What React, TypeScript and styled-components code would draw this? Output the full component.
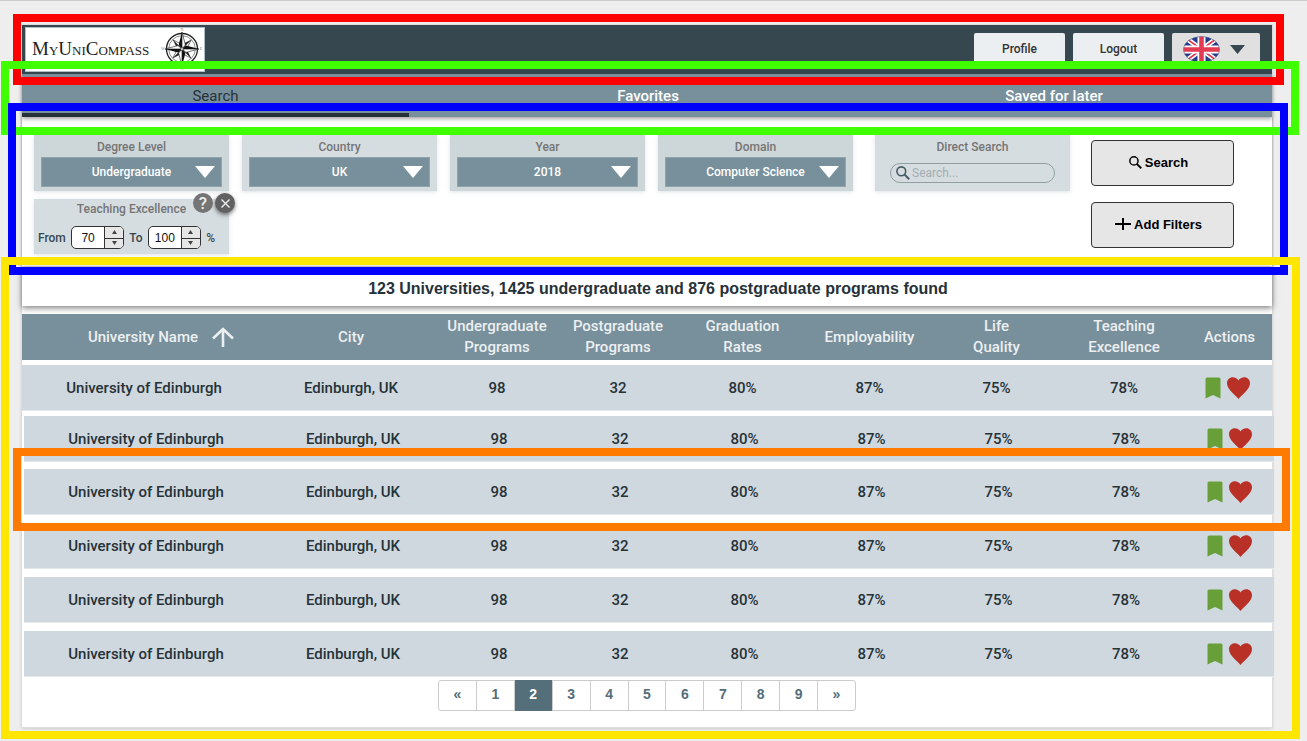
import React, { useState } from "react";
import styled, { createGlobalStyle, css } from "styled-components";

const GlobalStyle = createGlobalStyle`
  *, *::before, *::after { box-sizing: border-box; }
  body {
    margin: 0;
    background: #eeeeee;
    color: #263238;
    font-family: Roboto, "Liberation Sans", sans-serif;
  }
  button, input, select { font-family: inherit; margin: 0; }
`;

/* Coloured annotation frame drawn over a part of the page. */
const frame = (color: string, top: number, right: number, bottom: number, left: number, level: number) => css`
  position: relative;
  &::after {
    content: "";
    position: absolute;
    inset: ${-top}px ${-right}px ${-bottom}px ${-left}px;
    border: 8px solid ${color};
    pointer-events: none;
    z-index: ${level};
  }
`;

const Page = styled.div`
  min-height: 100vh;
  padding: 24px 35px 13px 22px;
  border-top: 1px solid #cccccc;
  overflow: hidden;
`;

const Sheet = styled.main`
  background: #ffffff;
  box-shadow: 0 0 0 1px #dddddd, 0 1px 3px rgba(0, 0, 0, 0.25);
`;

const TopBar = styled.header`
  ${frame("#ff0000", 11, 12, 11, 9, 1)}
  display: flex;
  justify-content: space-between;
  align-items: flex-start;
  height: 49px;
  padding: 2px 12px 0 3px;
  background: #37474f;
`;

const Logo = styled.a`
  display: flex;
  align-items: center;
  justify-content: space-between;
  width: 180px;
  height: 45px;
  padding: 0 1px 2px 6px;
  border: 1px solid #b0bec5;
  background: #ffffff;
  color: #222222;
  font: 19px/22px "Liberation Serif", serif;
  font-variant: small-caps;
  text-decoration: none;
`;

const TopActions = styled.div`
  display: flex;
  gap: 8px;
  padding-top: 6px;
`;

const TopButton = styled.button<{ $muted?: boolean }>`
  display: flex;
  align-items: center;
  justify-content: center;
  gap: 10px;
  width: ${(p) => (p.$muted ? 88 : 91)}px;
  height: 32px;
  padding: ${(p) => (p.$muted ? "0 4px 0 0" : "0")};
  border: 0;
  border-radius: 2px;
  background: ${(p) => (p.$muted ? "#e0e0e0" : "#eceff1")};
  color: #333333;
  font-size: 12px;
  font-weight: 500;
`;

const Tabs = styled.nav`
  ${frame("#40ff00", 13, 27, 18, 21, 2)}
  display: grid;
  grid-template-columns: 387fr 478fr 334fr 51fr;
  height: 43px;
  background: #78909c;
  box-shadow: 0 2px 4px rgba(0, 0, 0, 0.35);
`;

const Tab = styled.a<{ $active?: boolean }>`
  padding-top: 11px;
  border-bottom: 4px solid ${(p) => (p.$active ? "#263238" : "transparent")};
  color: ${(p) => (p.$active ? "#263238" : "#ffffff")};
  font-size: 15px;
  font-weight: ${(p) => (p.$active ? 400 : 500)};
  line-height: 22px;
  text-align: center;
  text-decoration: none;
`;

const Filters = styled.form`
  ${frame("#0000ff", 14, 16, 9, 14, 3)}
  display: grid;
  grid-template-columns: repeat(4, 195fr) 204fr 151fr;
  grid-template-rows: 56px 55px;
  gap: 8px 13px;
  height: 149px;
  padding: 18px 38px 12px 12px;
  box-shadow: 0 1px 2px rgba(0, 0, 0, 0.4);
`;

const FilterCard = styled.div<{ $light?: boolean; $inset?: boolean; $compact?: boolean }>`
  position: relative;
  display: flex;
  flex-direction: column;
  align-items: center;
  margin-left: ${(p) => (p.$inset ? 9 : 0)}px;
  padding: ${(p) => (p.$compact ? 2 : 4)}px 7px;
  background: ${(p) => (p.$light ? "#d6dde0" : "#cdd6d8")};
  box-shadow: 0 1px 4px rgba(120, 144, 156, 0.25);
`;

const FilterTitle = styled.label`
  height: 18px;
  color: #757575;
  font-size: 12px;
  font-weight: 500;
  line-height: 16px;
`;

const SelectBox = styled.div`
  position: relative;
  width: 100%;
  svg {
    position: absolute;
    right: 7px;
    top: 9px;
    pointer-events: none;
  }
`;

const Select = styled.select`
  display: block;
  width: 100%;
  height: 30px;
  padding: 0;
  border: 1px solid #90a4ae;
  border-radius: 0;
  appearance: none;
  background: #78909c;
  color: #ffffff;
  font-size: 12px;
  font-weight: 500;
  text-align: center;
  text-align-last: center;
`;

const SearchBox = styled.div`
  display: flex;
  align-items: center;
  gap: 2px;
  width: 165px;
  height: 20px;
  margin-top: 6px;
  padding: 0 5px;
  border: 1px solid #90a0a2;
  border-radius: 10px;
`;

const SearchInput = styled.input`
  flex: 1;
  min-width: 0;
  padding: 0;
  border: 0;
  outline: 0;
  background: transparent;
  font-size: 12px;
  &::placeholder { color: #a4adb0; }
`;

const RangeRow = styled.div`
  display: flex;
  align-items: center;
  align-self: stretch;
  justify-content: space-between;
  width: 177px;
  margin: 7px 0 0 -3px;
  color: #37474f;
  font-size: 12px;
  font-weight: 500;
`;

const Stepper = styled.span`
  display: flex;
  width: 53px;
  height: 23px;
  overflow: hidden;
  border: 1px solid #333333;
  border-radius: 5px;
  background: #ffffff;
`;

const NumberInput = styled.input`
  flex: 1;
  min-width: 0;
  padding: 0;
  border: 0;
  appearance: textfield;
  background: transparent;
  color: #111111;
  font: 12px "Liberation Sans", sans-serif;
  text-align: center;
  &::-webkit-inner-spin-button { appearance: none; margin: 0; }
`;

const StepButtons = styled.span`
  display: grid;
  grid-template-rows: 1fr 1fr;
  width: 19px;
  border-left: 1px solid #333333;
`;

const StepButton = styled.button`
  display: flex;
  align-items: center;
  justify-content: center;
  padding: 0;
  border: 0;
  background: #e6e6e6;
  & + & { border-top: 1px solid #333333; }
`;

const CardBadges = styled.div`
  position: absolute;
  top: -6px;
  right: -6px;
  display: flex;
  gap: 2px;
`;

const Badge = styled.button<{ $raised?: boolean }>`
  display: flex;
  width: 20px;
  height: 20px;
  align-items: center;
  justify-content: center;
  padding: 0;
  border: 0;
  border-radius: 50%;
  background: ${(p) => (p.$raised ? "#616161" : "#757575")};
  box-shadow: ${(p) => (p.$raised ? "0 2px 4px rgba(0, 0, 0, 0.5)" : "none")};
  color: #eeeeee;
  font-size: 17px;
  font-weight: 500;
  line-height: 20px;
`;

const FormActions = styled.div`
  grid-column: 6;
  grid-row: 1 / 3;
  display: flex;
  flex-direction: column;
  gap: 16px;
  padding: 5px 0 0 8px;
`;

const ActionButton = styled.button`
  display: flex;
  align-items: center;
  justify-content: center;
  gap: 3px;
  height: 46px;
  padding: 0 8px 2px 0;
  border: 1px solid #333333;
  border-radius: 4px;
  background: #e6e6e6;
  color: #000000;
  font: 700 13px "Liberation Sans", sans-serif;
`;

const Results = styled.section`
  ${frame("#ffe600", 9, 28, 12, 21, 4)}
  height: 461px;
`;

const Summary = styled.h2`
  height: 40px;
  margin: 0 0 8px;
  padding: 13px 0 0 22px;
  box-shadow: 0 2px 6px rgba(0, 0, 0, 0.5);
  font: 700 16px/20px "Liberation Sans", sans-serif;
  text-align: center;
`;

const Table = styled.table`
  display: block;
  position: relative;
`;

const TableHead = styled.thead`
  display: block;
`;

const TableBody = styled.tbody`
  display: block;
`;

const columns = css`
  display: grid;
  grid-template-columns: 244fr 170fr 122fr 120fr 129fr 125fr 129fr 126fr 85fr;
  align-items: center;
`;

const HeadRow = styled.tr`
  ${columns}
  height: 46px;
  background: #78909c;
`;

const HeadCell = styled.th`
  padding: 0;
  color: #eceff1;
  font-size: 15px;
  font-weight: 500;
  line-height: 21px;
  white-space: pre-line;
`;

const SortLabel = styled.span`
  display: flex;
  align-items: center;
  justify-content: flex-end;
  gap: 14px;
  padding-right: 32px;
`;

const Row = styled.tr<{ $gap: number; $framed: boolean }>`
  ${(p) => p.$framed && frame("#ff7a00", 21, 16, 17, 11, 5)}
  ${columns}
  height: 45px;
  margin-top: ${(p) => p.$gap}px;
  background: #cfd8de;
  box-shadow: 0 1px 0 #e4e9ec;
  & + & {
    margin-left: 2px;
    margin-right: -2px;
  }
`;

const Cell = styled.td`
  padding: 0;
  color: #263238;
  font-size: 15px;
  font-weight: 500;
  line-height: 20px;
  text-align: center;
`;

const RowActions = styled.div`
  display: flex;
  justify-content: center;
  gap: 6px;
  padding-right: 4px;
`;

const IconButton = styled.button`
  display: flex;
  padding: 0;
  border: 0;
  background: none;
`;

const Pager = styled.nav`
  display: flex;
  width: 418px;
  height: 31px;
  margin: 4px auto 0;
  border: 1px solid #cccccc;
  border-radius: 3px;
`;

const PageLink = styled.a<{ $current?: boolean }>`
  flex: 1;
  margin: ${(p) => (p.$current ? "-1px 0" : "0")};
  padding: ${(p) => (p.$current ? "1px 0" : "0")};
  background: ${(p) => (p.$current ? "#546e7a" : "transparent")};
  color: ${(p) => (p.$current ? "#ffffff" : "#546e7a")};
  font: 700 14px/27px "Liberation Sans", sans-serif;
  text-align: center;
  text-decoration: none;
  & + & { border-left: 1px solid #cccccc; }
`;

const Compass = () => (
  <svg width="42" height="42" viewBox="-21 -21 42 42" aria-hidden="true">
    <circle r="15.5" fill="none" stroke="#222" strokeWidth="1.3" />
    <circle r="13.3" fill="none" stroke="#444" strokeWidth="0.6" />
    {[45, 135, 225, 315].map((a) => (
      <g key={a} transform={`rotate(${a})`}>
        <path d="M0 0 L-3 -4 L0 -13Z" fill="#222" />
        <path d="M0 0 L3 -4 L0 -13Z" fill="#fff" stroke="#222" strokeWidth="0.6" />
      </g>
    ))}
    {[0, 90, 180, 270].map((a) => (
      <g key={a} transform={`rotate(${a})`}>
        <path d="M0 0 L-3.4 -4 L0 -17Z" fill="#111" />
        <path d="M0 0 L3.4 -4 L0 -17Z" fill="#fff" stroke="#111" strokeWidth="0.6" />
      </g>
    ))}
    <circle r="1.4" fill="#fff" stroke="#111" strokeWidth="0.6" />
    <g fill="#777777" fontFamily="Liberation Serif, serif" fontSize="4" textAnchor="middle">
      <text x="0" y="-17.6">N</text>
      <text x="19" y="1.4">E</text>
      <text x="0" y="20.6">S</text>
      <text x="-19" y="1.4">W</text>
    </g>
  </svg>
);

const Flag = () => (
  <svg width="37" height="27" viewBox="0 0 37 27" aria-hidden="true">
    <defs>
      <clipPath id="flagShape"><ellipse cx="18.5" cy="13.5" rx="18" ry="13" /></clipPath>
    </defs>
    <g clipPath="url(#flagShape)">
      <rect width="37" height="27" fill="#263a8a" />
      <path d="M0 0L37 27M37 0L0 27" stroke="#fff" strokeWidth="5" />
      <path d="M0 0L37 27M37 0L0 27" stroke="#d9304c" strokeWidth="1.6" />
      <path d="M18.5 0V27M0 13.5H37" stroke="#fff" strokeWidth="8" />
      <path d="M18.5 0V27M0 13.5H37" stroke="#e33b52" strokeWidth="4.6" />
    </g>
    <ellipse cx="18.5" cy="13.5" rx="18" ry="13" fill="none" stroke="#5c6690" strokeOpacity="0.5" />
  </svg>
);

const Triangle = ({ width, height, color, up }: { width: number; height: number; color: string; up?: boolean }) => (
  <svg width={width} height={height} viewBox="0 0 20 12" preserveAspectRatio="none" aria-hidden="true">
    <path d={up ? "M0 12H20L10 0Z" : "M0 0H20L10 12Z"} fill={color} />
  </svg>
);

const Magnifier = ({ size, color }: { size: number; color: string }) => (
  <svg width={size} height={size} viewBox="0 0 14 14" fill="none" stroke={color} strokeWidth="1.6" aria-hidden="true">
    <circle cx="5.3" cy="5.3" r="4.4" />
    <path d="M8.4 8.4L13.2 13.2" strokeWidth="2" />
  </svg>
);

const SelectFilter = ({ id, title, options, light }: { id: string; title: string; options: string[]; light?: boolean }) => (
  <FilterCard $light={light}>
    <FilterTitle htmlFor={id}>{title}</FilterTitle>
    <SelectBox>
      <Select id={id}>
        {options.map((o) => <option key={o}>{o}</option>)}
      </Select>
      <Triangle width={20} height={12} color="#ffffff" />
    </SelectBox>
  </FilterCard>
);

const NumberField = ({ id, initial }: { id: string; initial: number }) => {
  const [value, setValue] = useState(initial);
  return (
    <Stepper>
      <NumberInput id={id} type="number" value={value} onChange={(e) => setValue(Number(e.target.value))} />
      <StepButtons>
        <StepButton type="button" aria-label="Increase" onClick={() => setValue(value + 1)}>
          <Triangle width={5} height={4} color="#444444" up />
        </StepButton>
        <StepButton type="button" aria-label="Decrease" onClick={() => setValue(value - 1)}>
          <Triangle width={5} height={4} color="#444444" />
        </StepButton>
      </StepButtons>
    </Stepper>
  );
};

const headings = [
  "City",
  "Undergraduate\nPrograms",
  "Postgraduate\nPrograms",
  "Graduation\nRates",
  "Employability",
  "Life\nQuality",
  "Teaching\nExcellence",
  "Actions",
];

const record = ["University of Edinburgh", "Edinburgh, UK", "98", "32", "80%", "87%", "75%", "78%"];
const rowGaps = [5, 6, 8, 9, 9, 9];
const pages = ["«", "1", "2", "3", "4", "5", "6", "7", "8", "9", "»"];

export default function App() {
  return (
    <>
      <GlobalStyle />
      <Page>
        <Sheet>
          <TopBar>
            <Logo href="#home">
              MyUniCompass
              <Compass />
            </Logo>
            <TopActions>
              <TopButton>Profile</TopButton>
              <TopButton>Logout</TopButton>
              <TopButton $muted aria-label="Language">
                <Flag />
                <Triangle width={15} height={9} color="#37474f" />
              </TopButton>
            </TopActions>
          </TopBar>

          <Tabs>
            <Tab href="#search" $active>Search</Tab>
            <Tab href="#favorites">Favorites</Tab>
            <Tab href="#saved">Saved for later</Tab>
          </Tabs>

          <Filters onSubmit={(e) => e.preventDefault()}>
            <SelectFilter id="degree" title="Degree Level" options={["Undergraduate"]} />
            <SelectFilter id="country" title="Country" options={["UK"]} light />
            <SelectFilter id="year" title="Year" options={["2018"]} />
            <SelectFilter id="domain" title="Domain" options={["Computer Science"]} />
            <FilterCard $light $inset>
              <FilterTitle htmlFor="direct">Direct Search</FilterTitle>
              <SearchBox>
                <Magnifier size={14} color="#455a64" />
                <SearchInput id="direct" placeholder="Search..." />
              </SearchBox>
            </FilterCard>
            <FormActions>
              <ActionButton type="submit">
                <Magnifier size={13} color="#000000" />
                Search
              </ActionButton>
              <ActionButton type="button">
                <svg width="16" height="12" viewBox="0 0 16 12" aria-hidden="true">
                  <path d="M0 6H16M8 0V12" stroke="#000" strokeWidth="2" />
                </svg>
                Add Filters
              </ActionButton>
            </FormActions>
            <FilterCard $light $compact>
              <FilterTitle as="div">Teaching Excellence</FilterTitle>
              <RangeRow>
                <label htmlFor="from">From</label>
                <NumberField id="from" initial={70} />
                <label htmlFor="to">To</label>
                <NumberField id="to" initial={100} />
                <span>%</span>
              </RangeRow>
              <CardBadges>
                <Badge type="button">?</Badge>
                <Badge type="button" $raised aria-label="Remove filter">
                  <svg width="9" height="9" viewBox="0 0 9 9" aria-hidden="true">
                    <path d="M0.5 0.5L8.5 8.5M8.5 0.5L0.5 8.5" stroke="#eee" strokeWidth="1.4" />
                  </svg>
                </Badge>
              </CardBadges>
            </FilterCard>
          </Filters>

          <Results>
            <Summary>123 Universities, 1425 undergraduate and 876 postgraduate programs found</Summary>
            <Table>
              <TableHead>
                <HeadRow>
                  <HeadCell scope="col">
                    <SortLabel>
                      University Name
                      <svg width="22" height="20" viewBox="0 0 22 20" fill="none" stroke="#eceff1" strokeWidth="2.6" aria-hidden="true">
                        <path d="M11 20V2M1 11.5L11 2L21 11.5" />
                      </svg>
                    </SortLabel>
                  </HeadCell>
                  {headings.map((h) => <HeadCell key={h} scope="col">{h}</HeadCell>)}
                </HeadRow>
              </TableHead>
              <TableBody>
                {rowGaps.map((gap, i) => (
                  <Row key={i} $gap={gap} $framed={i === 2}>
                    {record.map((value) => <Cell key={value}>{value}</Cell>)}
                    <Cell>
                      <RowActions>
                        <IconButton aria-label="Save for later">
                          <svg width="16" height="22" viewBox="0 0 16 22" aria-hidden="true">
                            <path d="M2 0.5H14Q15.5 0.5 15.5 2V21.5L8 18L0.5 21.5V2Q0.5 0.5 2 0.5Z" fill="#689f38" />
                          </svg>
                        </IconButton>
                        <IconButton aria-label="Favorite">
                          <svg width="23" height="22" viewBox="0 0 23 22" aria-hidden="true">
                            <path d="M11.5 22C8 17.5 0 12.5 0 6.3C0 2.8 2.6 0.3 5.8 0.3C8.2 0.3 10.4 1.6 11.5 3.4C12.6 1.6 14.8 0.3 17.2 0.3C20.4 0.3 23 2.8 23 6.3C23 12.5 15 17.5 11.5 22Z" fill="#b93026" />
                          </svg>
                        </IconButton>
                      </RowActions>
                    </Cell>
                  </Row>
                ))}
              </TableBody>
            </Table>
            <Pager aria-label="Pages">
              {pages.map((p) => <PageLink key={p} href="#results" $current={p === "2"}>{p}</PageLink>)}
            </Pager>
          </Results>
        </Sheet>
      </Page>
    </>
  );
}
